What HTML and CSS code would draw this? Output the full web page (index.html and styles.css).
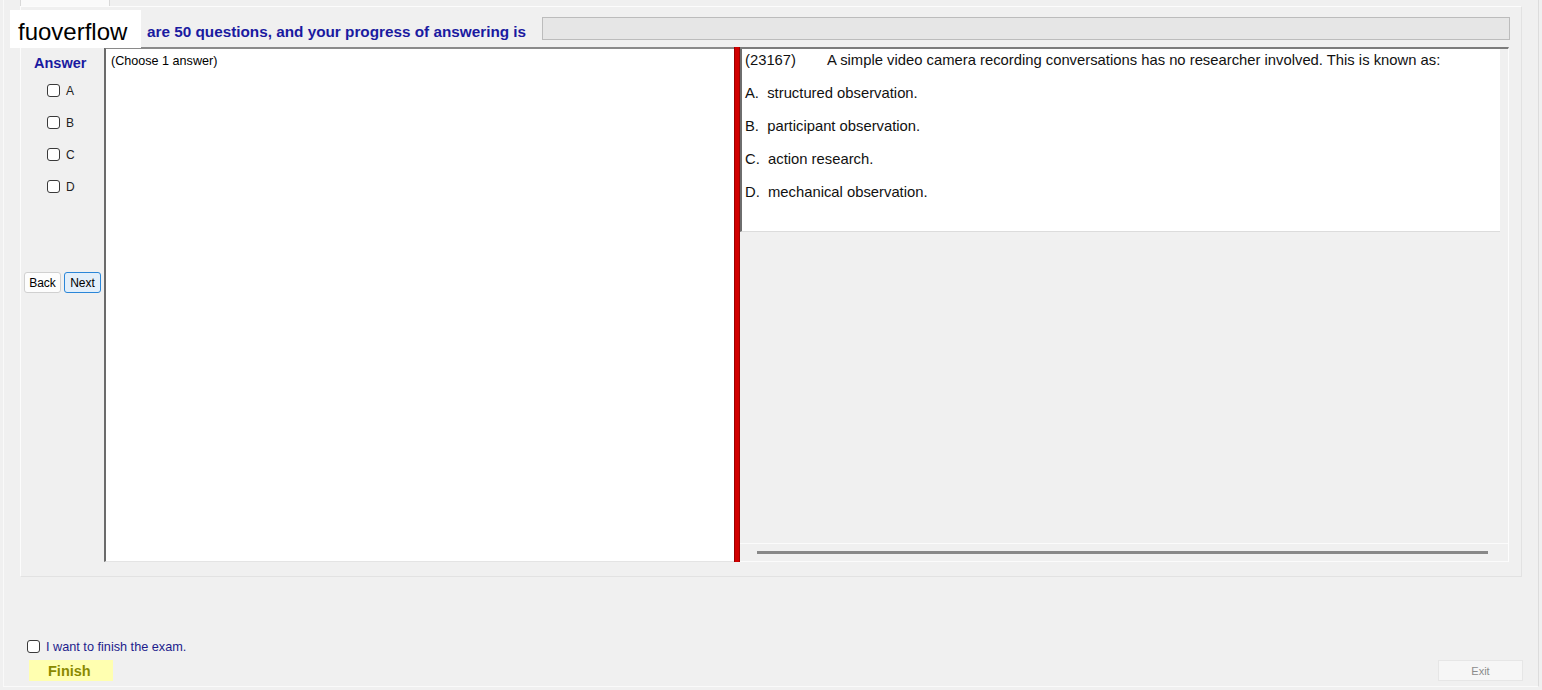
FILE: index.html
```html
<!DOCTYPE html>
<html lang="en">
<head>
    <meta charset="UTF-8">
    <title>Exam</title>
    <link rel="stylesheet" href="styles.css">
</head>
<body>
    <div class="window">
        <div class="tab"></div>

        <div class="group">
            <div class="head">
                <span class="head-text">are 50 questions, and your progress of answering is</span>
                <div class="progress"></div>
            </div>

            <div class="main">
                <div class="side">
                    <div class="answer-title">Answer</div>
                    <label class="opt"><input type="checkbox"> A</label>
                    <label class="opt"><input type="checkbox"> B</label>
                    <label class="opt"><input type="checkbox"> C</label>
                    <label class="opt"><input type="checkbox"> D</label>
                    <div class="nav">
                        <button class="btn">Back</button>
                        <button class="btn btn-next">Next</button>
                    </div>
                </div>

                <div class="textpane">(Choose 1 answer)</div>

                <div class="split"></div>

                <div class="qpane">
                    <div class="qbox">
                        <p><span class="qid">(23167)</span>A simple video camera recording conversations has no researcher involved. This is known as:</p>
                        <p>A.  structured observation.</p>
                        <p>B.  participant observation.</p>
                        <p>C.  action research.</p>
                        <p>D.  mechanical observation.</p>
                    </div>
                    <div class="qfill"></div>
                    <div class="hscroll"><div class="bar"></div></div>
                </div>
            </div>
        </div>

        <div class="footer">
            <div class="finish-box">
                <label class="confirm"><input type="checkbox"> I want to finish the exam.</label>
                <button class="finish">Finish</button>
            </div>
            <button class="exit">Exit</button>
        </div>
    </div>

    <div class="brand">fuoverflow</div>
</body>
</html>
```

FILE: styles.css
```css
html, body {
    margin: 0;
    padding: 0;
    background-color: #f0f0f0;
    font-family: "Liberation Sans", Arial, sans-serif;
    color: #000000;
}

body {
    width: 1542px;
    height: 690px;
    overflow: hidden;
}

.window {
    margin-left: 3px;
    width: 1536px;
    height: 687px;
    box-sizing: border-box;
    border-left: 1px solid #f9f9f9;
    border-right: 1px solid #dcdcdc;
    border-bottom: 1px solid #fafafa;
    display: flex;
    flex-direction: column;
}

.tab {
    margin-left: 16px;
    width: 90px;
    height: 6px;
    box-sizing: border-box;
    background-color: #fafafa;
    border-left: 1px solid #d9d9d9;
    border-right: 1px solid #d9d9d9;
}

.group {
    margin-left: 16px;
    width: 1502px;
    height: 571px;
    box-sizing: border-box;
    border: 1px solid #fcfcfc;
    border-right-color: #e2e2e2;
    border-bottom-color: #e2e2e2;
    padding: 10px 11px 14px 0;
}

.head {
    display: flex;
    align-items: center;
    height: 23px;
}

.head-text {
    margin-left: 126px;
    padding-top: 7px;
    font-size: 15.3px;
    font-weight: bold;
    color: #1a1aa0;
    white-space: nowrap;
}

.progress {
    flex: 1;
    margin-left: 16px;
    height: 23px;
    box-sizing: border-box;
    background-color: #e6e6e6;
    border: 1px solid #bcbcbc;
}

.main {
    margin-top: 7px;
    margin-left: 3px;
    height: 515px;
    display: flex;
}

.side {
    width: 80px;
    display: flex;
    flex-direction: column;
    padding-top: 8px;
    box-sizing: border-box;
}

.answer-title {
    margin-left: 10px;
    font-size: 14.5px;
    font-weight: bold;
    line-height: 16px;
    color: #1a1aa0;
    margin-bottom: 13px;
}

.opt {
    display: flex;
    align-items: center;
    height: 13px;
    margin-left: 23px;
    margin-bottom: 19px;
    font-size: 12px;
    color: #222222;
}

input[type="checkbox"] {
    appearance: none;
    -webkit-appearance: none;
    width: 13px;
    height: 13px;
    margin: 0 6px 0 0;
    box-sizing: border-box;
    border: 1px solid #3a3a3a;
    border-radius: 3px;
    background-color: #ffffff;
}

.nav {
    margin-top: 60px;
    display: flex;
    gap: 3px;
}

.btn {
    width: 37px;
    height: 21px;
    padding: 0;
    font-family: "Liberation Sans", Arial, sans-serif;
    font-size: 12px;
    color: #000000;
    background-color: #fdfdfd;
    border: 1px solid #d0d0d0;
    border-radius: 3px;
}

.btn-next {
    background-color: #e3effa;
    border-color: #2a86d8;
}

.textpane {
    width: 630px;
    box-sizing: border-box;
    background-color: #ffffff;
    border-left: 2px solid #6b6b6b;
    border-top: 2px solid #8a8a8a;
    border-bottom: 1px solid #e4e4e4;
    padding: 5px 5px;
    font-size: 12.6px;
}

.split {
    width: 6px;
    box-sizing: border-box;
    background-color: #d10000;
    border-left: 1px solid #9a0000;
    border-right: 1px solid #a00000;
}

.qpane {
    width: 769px;
    box-sizing: border-box;
    display: flex;
    flex-direction: column;
    border-top: 2px solid #7c7c7c;
    border-right: 1px solid #fdfdfd;
}

.qbox {
    width: 760px;
    height: 183px;
    box-sizing: border-box;
    background-color: #ffffff;
    border-left: 2px solid #6e6e6e;
    border-bottom: 1px solid #dcdcdc;
    padding: 2px 4px 0 3px;
    font-size: 14.8px;
    color: #111111;
}

.qbox p {
    margin: 0 0 15px 0;
    line-height: 18px;
    white-space: pre;
}

.qid {
    display: inline-block;
    width: 82px;
}

.qfill {
    flex: 1;
}

.hscroll {
    height: 17px;
    border-top: 1px solid #fbfbfb;
    border-bottom: 1px solid #fbfbfb;
    display: flex;
    align-items: center;
    padding: 0 20px 0 17px;
}

.hscroll .bar {
    flex: 1;
    height: 3px;
    background-color: #888888;
}

.footer {
    margin-top: 63px;
    display: flex;
    justify-content: space-between;
    align-items: flex-end;
    padding-right: 15px;
}

.finish-box {
    display: flex;
    flex-direction: column;
}

.confirm {
    display: flex;
    align-items: center;
    margin-left: 23px;
    height: 13px;
    font-size: 12.7px;
    color: #1c1c8c;
}

.finish {
    margin-top: 7px;
    margin-left: 25px;
    width: 84px;
    height: 21px;
    padding: 0 0 0 19px;
    text-align: left;
    background-color: #ffffb0;
    border: none;
    font-family: "Liberation Sans", Arial, sans-serif;
    font-size: 14.5px;
    font-weight: bold;
    color: #8a8a00;
}

.exit {
    width: 85px;
    height: 21px;
    padding: 0;
    background-color: #f6f6f6;
    border: 1px solid #e6e6e6;
    font-family: "Liberation Sans", Arial, sans-serif;
    font-size: 11px;
    color: #8c8c8c;
}

.brand {
    position: absolute;
    left: 10px;
    top: 10px;
    width: 131px;
    height: 38px;
    box-sizing: border-box;
    padding: 8px 0 0 8px;
    background-color: #ffffff;
    font-size: 24px;
    line-height: 28px;
    color: #000000;
}
```
